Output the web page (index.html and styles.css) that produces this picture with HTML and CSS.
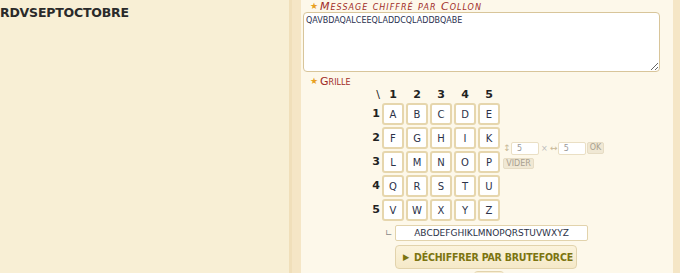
FILE: index.html
```html
<!DOCTYPE html>
<html>
<head>
<meta charset="utf-8">
<link rel="stylesheet" href="styles.css">
</head>
<body>
<div class="page">
  <div class="left">
    <div class="result">RDVSEPTOCTOBRE</div>
  </div>
  <div class="divider"></div>
  <div class="right">
    <div class="label label-italic"><span class="star">★</span>Message chiffré par Collon</div>
    <textarea class="message">QAVBDAQALCEEQLADDCQLADDBQABE</textarea>
    <div class="label label-grille"><span class="star">★</span>Grille</div>
    <div class="grid-area">
      <div class="grid-row">
        <div class="grid">
          <div class="hd hd0">\</div><div class="hd">1</div><div class="hd">2</div><div class="hd">3</div><div class="hd">4</div><div class="hd">5</div>
          <div class="rl">1</div><div class="cell">A</div><div class="cell">B</div><div class="cell">C</div><div class="cell">D</div><div class="cell">E</div>
          <div class="rl">2</div><div class="cell">F</div><div class="cell">G</div><div class="cell">H</div><div class="cell">I</div><div class="cell">K</div>
          <div class="rl">3</div><div class="cell">L</div><div class="cell">M</div><div class="cell">N</div><div class="cell">O</div><div class="cell">P</div>
          <div class="rl">4</div><div class="cell">Q</div><div class="cell">R</div><div class="cell">S</div><div class="cell">T</div><div class="cell">U</div>
          <div class="rl">5</div><div class="cell">V</div><div class="cell">W</div><div class="cell">X</div><div class="cell">Y</div><div class="cell">Z</div>
        </div>
        <div class="controls">
          <div class="size-row">
            <span class="arrow">↕</span><span class="small-input">5</span><span class="times">×</span><span class="arrow">↔</span><span class="small-input">5</span><span class="small-btn">OK</span>
          </div>
          <span class="small-btn vider">VIDER</span>
        </div>
      </div>
      <div class="alpha-row">
        <span class="corner">∟</span><span class="alpha">ABCDEFGHIKLMNOPQRSTUVWXYZ</span>
      </div>
      <div class="btn-row">
        <span class="brute"><span class="tri">▶</span>DÉCHIFFRER PAR BRUTEFORCE</span>
      </div>
      <div class="next-btn"></div>
    </div>
  </div>
  <div class="edge"></div>
</div>
</body>
</html>
```
FILE: styles.css
```css
html, body {
  margin: 0;
  padding: 0;
  background: #fdf8ea;
  overflow: hidden;
}
.page {
  display: flex;
  width: 680px;
  height: 273px;
  overflow: hidden;
  font-family: "DejaVu Sans", Verdana, sans-serif;
}
.left {
  width: 289px;
  background: #f8efd5;
  flex: none;
}
.result {
  font-size: 12.5px;
  font-weight: bold;
  color: #2a2a2a;
  padding-top: 5px;
  line-height: 15px;
  letter-spacing: -0.2px;
}
.divider {
  width: 12px;
  flex: none;
  background: linear-gradient(to right, #f0dfba 0, #f0dfba 3px, #f5e6c6 3px);
}
.right {
  flex: 1;
  background: #fdf8ea;
  padding-left: 2px;
  display: flex;
  flex-direction: column;
  align-items: flex-start;
}
.right > *, .grid-area > * {
  flex-shrink: 0;
}
.edge {
  width: 7px;
  flex: none;
  background: #f5e6c6;
}
.label {
  font-size: 11px;
  height: 12px;
  line-height: 12px;
  color: #a02c28;
  font-variant: small-caps;
  padding-left: 7px;
  white-space: nowrap;
}
.label-italic {
  font-style: italic;
  letter-spacing: 1px;
  line-height: 13px;
}
.star {
  display: inline-block;
  line-height: 0;
  color: #e8a020;
  font-size: 9px;
  font-style: normal;
  letter-spacing: 0;
  margin-right: 2px;
  vertical-align: 1px;
}
.message {
  display: block;
  width: 357px;
  height: 60px;
  box-sizing: border-box;
  margin: 0;
  border: 1px solid #d8c59a;
  border-radius: 4px;
  background: #fff;
  font-family: "DejaVu Sans", sans-serif;
  font-size: 8px;
  color: #2a3050;
  padding: 3px 2px;
  resize: vertical;
  outline: none;
}
.label-grille {
  margin-top: 3px;
  height: 13px;
  line-height: 13px;
}
.grid-area {
  margin-left: 65px;
  margin-top: 1px;
  display: flex;
  flex-direction: column;
  align-items: flex-start;
}
.grid-row {
  display: flex;
  align-items: center;
}
.grid {
  display: grid;
  grid-template-columns: 12px repeat(5, 22px);
  grid-template-rows: 12px repeat(5, 22px);
  gap: 2px;
}
.hd {
  font-size: 11px;
  font-weight: bold;
  color: #222;
  text-align: center;
  line-height: 12px;
}
.hd0 {
  text-align: right;
  font-weight: normal;
}
.rl {
  font-size: 11px;
  font-weight: bold;
  color: #222;
  text-align: right;
  line-height: 22px;
}
.cell {
  box-sizing: border-box;
  border: 2px solid #e6d6ad;
  border-radius: 3px;
  background: #fff;
  font-size: 10px;
  color: #2c3248;
  display: flex;
  align-items: center;
  justify-content: center;
}
.controls {
  margin-left: 3px;
  display: flex;
  flex-direction: column;
  align-items: flex-start;
  gap: 3px;
}
.size-row {
  display: flex;
  align-items: center;
}
.arrow {
  font-size: 9px;
  color: #c8b898;
  width: 8px;
  text-align: center;
}
.times {
  font-size: 8px;
  color: #bbb;
  margin: 0 2px;
}
.small-input {
  box-sizing: border-box;
  width: 28px;
  height: 13px;
  border: 1px solid #eadfc4;
  background: #fff;
  font-size: 8px;
  color: #999;
  padding-left: 5px;
  line-height: 11px;
  border-radius: 2px;
}
.small-btn {
  box-sizing: border-box;
  height: 12px;
  padding: 0 2px;
  background: #f0e8d4;
  border: 1px solid #e6dcc4;
  border-radius: 2px;
  font-size: 8px;
  line-height: 10px;
  color: #a8a090;
  margin-left: 1px;
}
.vider {
  height: 11px;
  margin-left: 0;
  width: 31px;
  text-align: center;
}
.alpha-row {
  display: flex;
  align-items: center;
  margin-top: 4px;
  margin-left: 17px;
}
.corner {
  font-size: 9px;
  color: #888;
  width: 10px;
}
.alpha {
  box-sizing: border-box;
  width: 193px;
  height: 16px;
  border: 1px solid #e2d3ac;
  border-radius: 2px;
  background: #fff;
  text-align: center;
  font-size: 9px;
  line-height: 14px;
  color: #2c3248;
}
.btn-row {
  margin-left: 27px;
  margin-top: 4px;
}
.brute {
  display: flex;
  align-items: center;
  box-sizing: border-box;
  width: 182px;
  height: 24px;
  border: 1px solid #e2d3ac;
  border-radius: 4px;
  background: linear-gradient(#fbf3dc, #f5e9c8);
  color: #7c7410;
  font-family: "DejaVu Sans Condensed", "DejaVu Sans", sans-serif;
  font-size: 10.5px;
  font-weight: bold;
  padding-left: 7px;
  white-space: nowrap;
  letter-spacing: -0.2px;
}
.tri {
  font-size: 9px;
  margin-right: 5px;
}
.next-btn {
  margin-left: 106px;
  margin-top: 2px;
  width: 30px;
  height: 4px;
  border-top: 1px solid #e2d3ac;
  border-radius: 4px 4px 0 0;
  background: #f8eed5;
}
```
